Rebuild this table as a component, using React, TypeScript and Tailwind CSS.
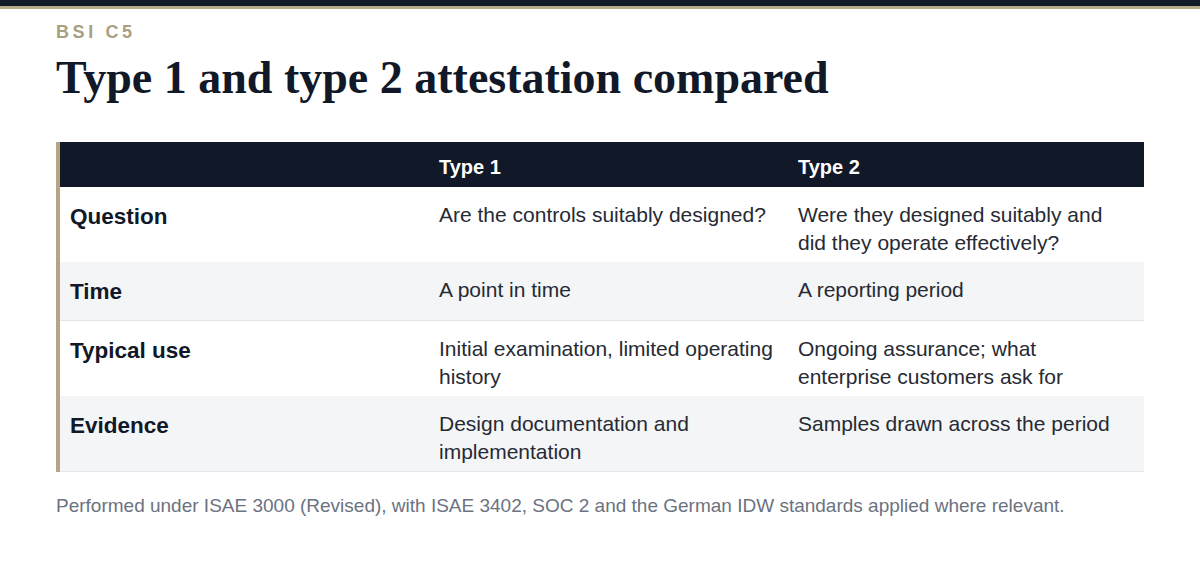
import React from "react";

const rows = [
  {
    label: "Question",
    t1: "Are the controls suitably designed?",
    t2: "Were they designed suitably and did they operate effectively?",
    gray: false,
  },
  { label: "Time", t1: "A point in time", t2: "A reporting period", gray: true },
  {
    label: "Typical use",
    t1: "Initial examination, limited operating history",
    t2: "Ongoing assurance; what enterprise customers ask for",
    gray: false,
  },
  {
    label: "Evidence",
    t1: "Design documentation and implementation",
    t2: "Samples drawn across the period",
    gray: true,
  },
];

export default function App() {
  return (
    <div className="w-[1200px] h-[576px] bg-white font-['Liberation_Sans',Arial,sans-serif] overflow-hidden">
      <div className="h-[6px] bg-[#111827]" />
      <div className="h-[3px] bg-[#b8a888]" />
      <div className="px-[56px]">
        <div className="mt-[11px] text-[18px] leading-[24px] font-bold tracking-[0.2em] text-[#ab9f82]">
          BSI C5
        </div>
        <h1 className="mt-[6px] font-['Liberation_Serif','Times_New_Roman',serif] text-[46px] leading-[56px] font-bold text-[#111827]">
          Type 1 and type 2 attestation compared
        </h1>
        <div className="mt-[36px] border-l-4 border-[#b5a485]">
          <div className="grid grid-cols-[369px_359px_1fr] bg-[#111827] text-white text-[20px] font-bold leading-[28px]">
            <div className="pt-[11px] pb-[6px] px-[10px]" />
            <div className="pt-[11px] pb-[6px] px-[10px]">Type 1</div>
            <div className="pt-[11px] pb-[6px] px-[10px]">Type 2</div>
          </div>
          {rows.map((r) => (
            <div
              key={r.label}
              className={
                r.gray
                  ? "grid grid-cols-[369px_359px_1fr] bg-[#f4f5f7] border-b border-[#e3e5e8]"
                  : "grid grid-cols-[369px_359px_1fr] bg-white"
              }
            >
              <div className="pt-[15px] pb-[13px] px-[10px] text-[22.5px] leading-[30px] font-bold text-[#111827]">
                {r.label}
              </div>
              <div className="pt-[14px] pb-[5px] px-[10px] text-[21px] leading-[28px] text-[#262a33]">
                {r.t1}
              </div>
              <div className="pt-[14px] pb-[5px] pl-[10px] pr-[20px] text-[21px] leading-[28px] text-[#262a33]">
                {r.t2}
              </div>
            </div>
          ))}
        </div>
        <p className="mt-[20px] text-[19px] leading-[28px] text-[#6b7280]">
          Performed under ISAE 3000 (Revised), with ISAE 3402, SOC 2 and the German IDW standards applied where relevant.
        </p>
      </div>
    </div>
  );
}
